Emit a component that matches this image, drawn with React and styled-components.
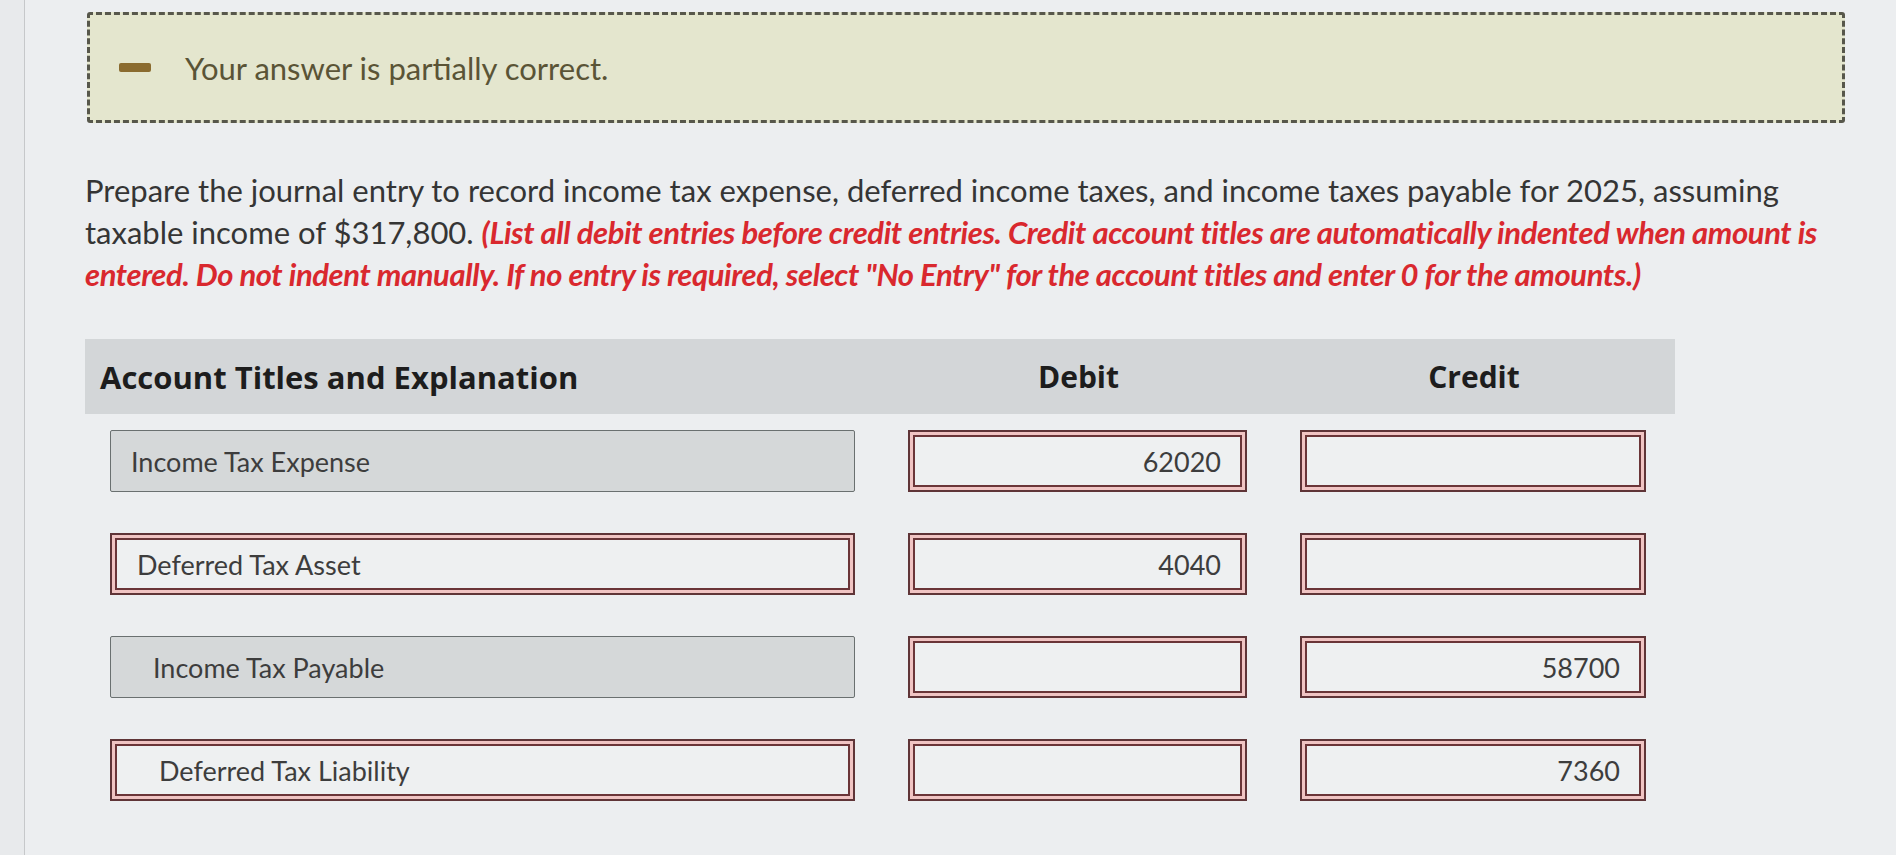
import React from 'react';
import styled, { createGlobalStyle, css } from 'styled-components';

const Global = createGlobalStyle`
  html, body { margin: 0; padding: 0; }
  body {
    background: #eceef0;
    font-family: Lato, "Open Sans", "Liberation Sans", sans-serif;
    color: #3b3b3b;
  }
`;

const Page = styled.div`
  display: flex;
  min-height: 855px;
  overflow: hidden;
`;

const Gutter = styled.div`
  width: 24px;
  flex-shrink: 0;
  background: #e8eaec;
  border-right: 1px solid #c6c8ca;
`;

const Main = styled.main`
  flex: 1;
  min-width: 0;
  padding: 12px 51px 0 60px;
  background: #eceef0;
`;

const Banner = styled.div`
  box-sizing: border-box;
  height: 111px;
  margin-left: 2px;
  display: flex;
  align-items: center;
  gap: 34px;
  padding-left: 29px;
  background: #e4e6ce;
  border: 3px dashed #57574b;
  border-radius: 3px;
`;

const MinusIcon = styled.span`
  display: block;
  width: 32px;
  height: 9px;
  border-radius: 2px;
  background: #8a6b2f;
`;

const BannerText = styled.span`
  font-size: 31px;
  color: #5a5436;
`;

const Prompt = styled.p`
  margin: 46px 0 0;
  font-size: 31px;
  line-height: 42px;
  color: #353535;
  white-space: nowrap;
`;

const Note = styled.em`
  color: #d9282e;
  font-weight: 700;
  font-style: italic;
  letter-spacing: -0.4px;
`;

const Table = styled.section`
  margin-top: 44px;
  width: 1590px;
`;

const HeaderRow = styled.div`
  box-sizing: border-box;
  height: 75px;
  display: grid;
  grid-template-columns: 1fr 339px 346px;
  column-gap: 53px;
  align-items: center;
  padding: 0 28px 0 15px;
  background: #d3d6d8;
  font-family: "Open Sans", Lato, sans-serif;
  font-weight: 700;
  color: #1d1d1d;
`;

const HeaderCell = styled.div`
  text-align: ${(p) => (p.$center ? 'center' : 'left')};
  font-size: ${(p) => (p.$center ? '30px' : '31px')};
`;

const Body = styled.div`
  display: flex;
  flex-direction: column;
  gap: 41px;
  padding-top: 16px;
`;

const EntryRow = styled.div`
  display: grid;
  grid-template-columns: 745px 339px 346px;
  column-gap: 53px;
  padding-left: 25px;
`;

const okStyle = css`
  background: #d5d8d9;
  border: 1.5px solid #6a7070;
  border-radius: 2px;
`;

const badStyle = css`
  background: #eef0f1;
  border: 2px solid #5f3437;
  box-shadow: inset 0 0 0 3px #f0c4c3, inset 0 0 0 5px #6a3538;
`;

const Field = styled.div`
  box-sizing: border-box;
  height: 62px;
  display: flex;
  align-items: center;
  justify-content: ${(p) => (p.$amount ? 'flex-end' : 'flex-start')};
  padding: ${(p) =>
    p.$amount
      ? '0 24px 0 0'
      : `0 0 0 ${(p.$tone === 'bad' ? 25 : 20) + (p.$indent ? 22 : 0)}px`};
  font-size: 27px;
  color: #3d3d3d;
  ${(p) => (p.$tone === 'ok' ? okStyle : badStyle)}
`;

const rows = [
  { title: 'Income Tax Expense', tone: 'ok', indent: false, debit: '62020', credit: '' },
  { title: 'Deferred Tax Asset', tone: 'bad', indent: false, debit: '4040', credit: '' },
  { title: 'Income Tax Payable', tone: 'ok', indent: true, debit: '', credit: '58700' },
  { title: 'Deferred Tax Liability', tone: 'bad', indent: true, debit: '', credit: '7360' },
];

export default function App() {
  return (
    <>
      <Global />
      <Page>
        <Gutter />
        <Main>
          <Banner>
            <MinusIcon />
            <BannerText>Your answer is partially correct.</BannerText>
          </Banner>
          <Prompt>
            Prepare the journal entry to record income tax expense, deferred income taxes, and income taxes payable for 2025, assuming
            <br />
            taxable income of $317,800.{' '}
            <Note>
              (List all debit entries before credit entries. Credit account titles are automatically indented when amount is
              <br />
              entered. Do not indent manually. If no entry is required, select "No Entry" for the account titles and enter 0 for the amounts.)
            </Note>
          </Prompt>
          <Table>
            <HeaderRow>
              <HeaderCell>Account Titles and Explanation</HeaderCell>
              <HeaderCell $center>Debit</HeaderCell>
              <HeaderCell $center>Credit</HeaderCell>
            </HeaderRow>
            <Body>
              {rows.map((r) => (
                <EntryRow key={r.title}>
                  <Field $tone={r.tone} $indent={r.indent}>{r.title}</Field>
                  <Field $tone="bad" $amount>{r.debit}</Field>
                  <Field $tone="bad" $amount>{r.credit}</Field>
                </EntryRow>
              ))}
            </Body>
          </Table>
        </Main>
      </Page>
    </>
  );
}
